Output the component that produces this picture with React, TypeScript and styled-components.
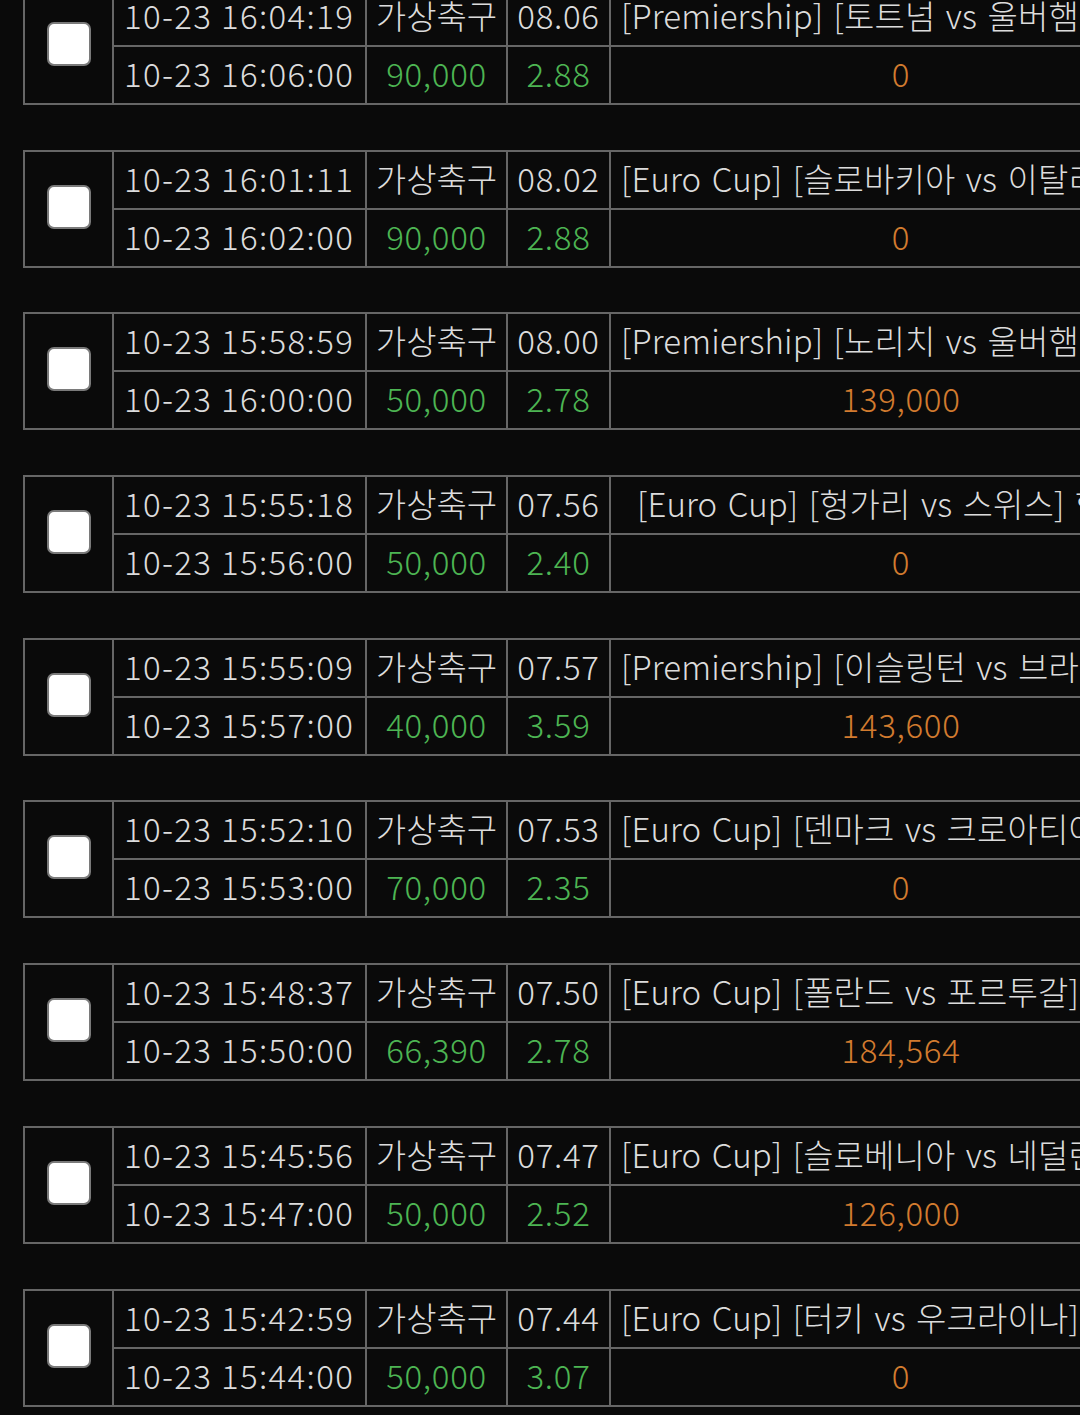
import { createGlobalStyle, styled } from "styled-components";

type Bet = {
  placed: string;
  closes: string;
  round: string;
  stake: string;
  odds: string;
  match: string;
  payout: string;
  indent?: boolean;
};

const bets: Bet[] = [
  { placed: "10-23 16:04:19", closes: "10-23 16:06:00", round: "08.06", stake: "90,000", odds: "2.88", match: "[Premiership] [토트넘 vs 울버햄튼] 토트넘 승", payout: "0" },
  { placed: "10-23 16:01:11", closes: "10-23 16:02:00", round: "08.02", stake: "90,000", odds: "2.88", match: "[Euro Cup] [슬로바키아 vs 이탈리아] 무승부", payout: "0" },
  { placed: "10-23 15:58:59", closes: "10-23 16:00:00", round: "08.00", stake: "50,000", odds: "2.78", match: "[Premiership] [노리치 vs 울버햄튼] 무승부", payout: "139,000" },
  { placed: "10-23 15:55:18", closes: "10-23 15:56:00", round: "07.56", stake: "50,000", odds: "2.40", match: "[Euro Cup] [헝가리 vs 스위스] 헝가리 승", payout: "0", indent: true },
  { placed: "10-23 15:55:09", closes: "10-23 15:57:00", round: "07.57", stake: "40,000", odds: "3.59", match: "[Premiership] [이슬링턴 vs 브라이튼] 무승부", payout: "143,600" },
  { placed: "10-23 15:52:10", closes: "10-23 15:53:00", round: "07.53", stake: "70,000", odds: "2.35", match: "[Euro Cup] [덴마크 vs 크로아티아] 덴마크 승", payout: "0" },
  { placed: "10-23 15:48:37", closes: "10-23 15:50:00", round: "07.50", stake: "66,390", odds: "2.78", match: "[Euro Cup] [폴란드 vs 포르투갈] 무승부", payout: "184,564" },
  { placed: "10-23 15:45:56", closes: "10-23 15:47:00", round: "07.47", stake: "50,000", odds: "2.52", match: "[Euro Cup] [슬로베니아 vs 네덜란드] 무승부", payout: "126,000" },
  { placed: "10-23 15:42:59", closes: "10-23 15:44:00", round: "07.44", stake: "50,000", odds: "3.07", match: "[Euro Cup] [터키 vs 우크라이나] 터키 승", payout: "0" },
];

const App = () => {
  return (
    <>
      <GlobalStyle />
      <List>
        {bets.map((b) => (
          <Ticket key={b.placed}>
            <CheckCell>
              <Check />
            </CheckCell>
            <TimeCell>{b.placed}</TimeCell>
            <GameCell $center>가상축구</GameCell>
            <Cell $center>{b.round}</Cell>
            <MatchCell $indent={b.indent}>{b.match}</MatchCell>
            <TimeCell>{b.closes}</TimeCell>
            <Cell $center $tone="green">{b.stake}</Cell>
            <Cell $center $tone="green">{b.odds}</Cell>
            <Cell $center $tone="orange">{b.payout}</Cell>
          </Ticket>
        ))}
      </List>
    </>
  );
};

export default App;

const GlobalStyle = createGlobalStyle`
  html, body {
    margin: 0;
    padding: 0;
    background: #0a0a0a;
    overflow: hidden;
  }
  body {
    font-family: "Noto Sans CJK KR", "Noto Sans", sans-serif;
    color: #dcdcdc;
  }
`;

const List = styled.div`
  display: flex;
  flex-direction: column;
  gap: 44.7px;
  margin-top: -13px;
  padding-left: 23px;
`;

const Ticket = styled.div`
  display: grid;
  grid-template-columns: 87px 251px 139px 101px 580px;
  grid-template-rows: 56px 56px;
  gap: 2px;
  padding: 2px;
  width: max-content;
  background: #666;
`;

const toneColor = {
  plain: "#dcdcdc",
  green: "#4db553",
  orange: "#d27b2f",
};

const Cell = styled.div<{ $center?: boolean; $tone?: "plain" | "green" | "orange" }>`
  background: #0a0a0a;
  display: flex;
  align-items: center;
  justify-content: ${(p) => (p.$center ? "center" : "flex-start")};
  padding: 0 10px 3px;
  font-size: 33px;
  font-weight: 300;
  line-height: 1;
  letter-spacing: 0.7px;
  white-space: nowrap;
  overflow: hidden;
  color: ${(p) => toneColor[p.$tone || "plain"]};
`;

const GameCell = styled(Cell)`
  letter-spacing: 0;
`;

const TimeCell = styled(Cell)`
  letter-spacing: 1.35px;
  word-spacing: 0;
`;

const MatchCell = styled(Cell)<{ $indent?: boolean }>`
  padding-left: ${(p) => (p.$indent ? "26px" : "10px")};
  letter-spacing: 0.1px;
  word-spacing: 3px;
`;

const CheckCell = styled.div`
  grid-row: span 2;
  background: #0a0a0a;
  display: flex;
  align-items: center;
  justify-content: center;
`;

const Check = styled.span`
  box-sizing: border-box;
  width: 44px;
  height: 44px;
  margin-bottom: 4px;
  margin-left: 1px;
  border: 2.5px solid #7a7a7a;
  border-radius: 7px;
  background: #fff;
`;
